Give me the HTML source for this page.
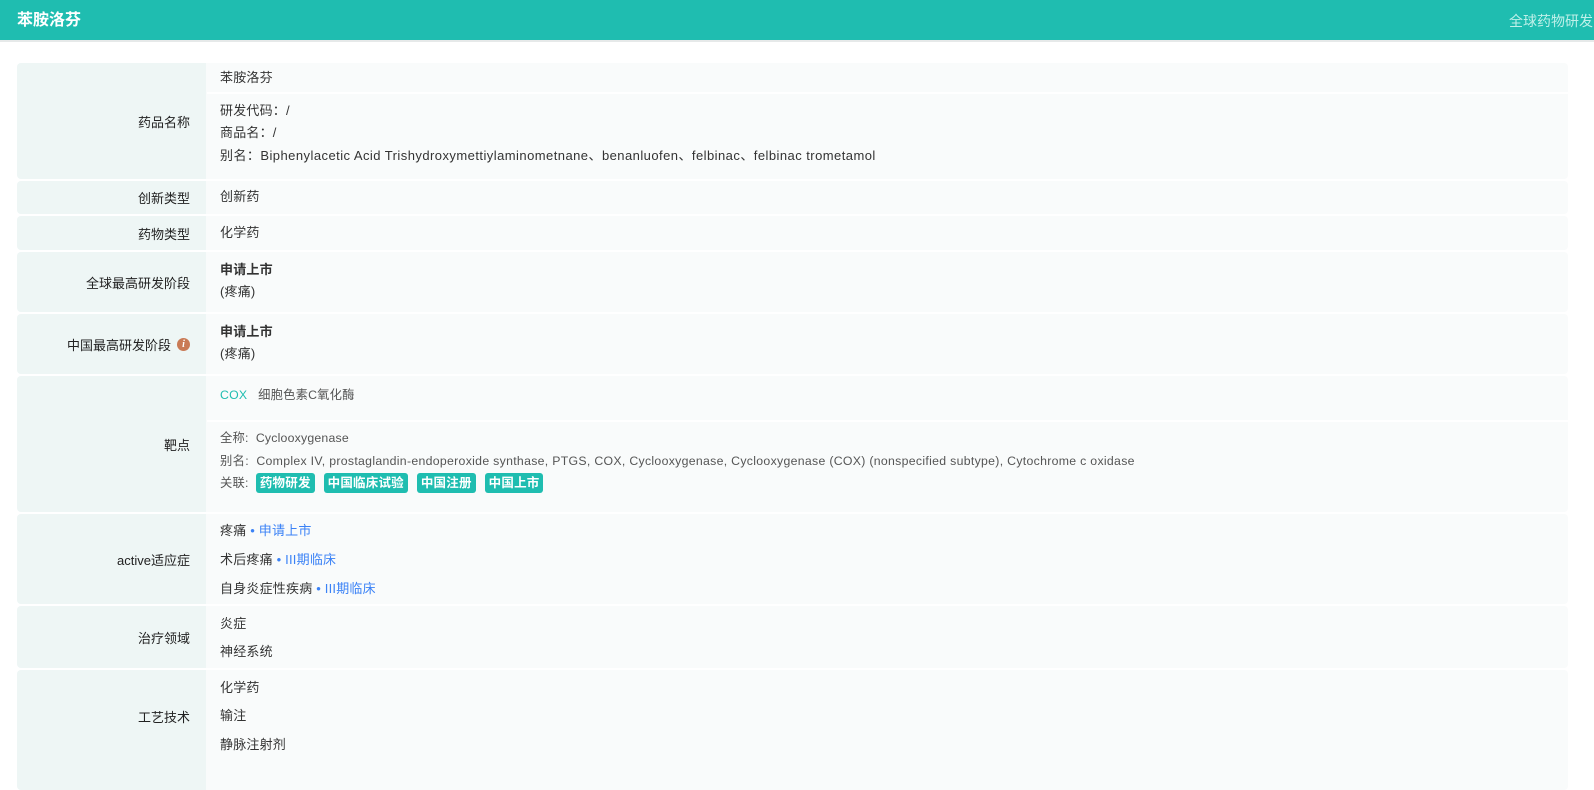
<!DOCTYPE html>
<html><head><meta charset="utf-8"><style>
*{margin:0;padding:0;box-sizing:border-box}
body{width:1594px;height:772px;overflow:hidden;background:#fff;font-family:"Liberation Sans","Noto Sans CJK SC",sans-serif;font-size:13px;color:#333}
.hd{position:absolute;left:0;top:0;width:1594px;height:42px;background:#1fbdb0;border-bottom:2px solid #e6e9e9;overflow:hidden}
.hd .t{position:absolute;left:17px;top:10px;color:#fff;font-size:16px;font-weight:bold;line-height:22px}
.hd .r{position:absolute;left:1509px;top:12px;color:#bff0e9;font-size:14px;line-height:18px;white-space:nowrap}
.row{position:absolute;left:17px;width:1551px;border-radius:4px;overflow:hidden;background:#f9fbfb}
.lb{position:absolute;left:0;top:0;bottom:0;width:189px;background:#eef6f5;display:flex;align-items:center;justify-content:flex-end;padding-right:16px;color:#222}
.l{position:absolute;left:203px;line-height:20px;white-space:nowrap;letter-spacing:0.2px}
.b{font-weight:bold}
.sep{position:absolute;left:190px;right:0;height:2px;background:#fff}
.g{color:#555;font-size:12.3px}
.tag{display:inline-block;background:#1fbdb0;color:#fff;font-weight:bold;font-size:12.5px;line-height:20px;padding:0 4px;border-radius:3px;margin-right:9px}
.bl{color:#3b82f6}
.i{display:inline-block;width:13px;height:13px;border-radius:50%;background:#c97a55;color:#fff;font-size:10px;font-style:italic;font-weight:bold;text-align:center;line-height:13px;margin-left:6px;font-family:"Liberation Serif",serif}
</style></head><body>
<div class="hd"><div class="t">苯胺洛芬</div><div class="r">全球药物研发</div></div>

<div class="row" style="top:63px;height:116px">
<div class="lb">药品名称</div>
<div class="l" style="top:5px">苯胺洛芬</div>
<div class="sep" style="top:29px"></div>
<div class="l" style="top:38px">研发代码：/</div>
<div class="l" style="top:60px">商品名：/</div>
<div class="l" style="top:83px;letter-spacing:0.45px">别名：Biphenylacetic Acid Trishydroxymettiylaminometnane、benanluofen、felbinac、felbinac trometamol</div>
</div>

<div class="row" style="top:181px;height:33px"><div class="lb">创新类型</div><div class="l" style="top:6px">创新药</div></div>
<div class="row" style="top:216px;height:34px"><div class="lb">药物类型</div><div class="l" style="top:7px">化学药</div></div>

<div class="row" style="top:252px;height:60px"><div class="lb">全球最高研发阶段</div>
<div class="l b" style="top:8px">申请上市</div><div class="l" style="top:30px">(疼痛)</div></div>

<div class="row" style="top:314px;height:60px"><div class="lb">中国最高研发阶段<span class="i">i</span></div>
<div class="l b" style="top:8px">申请上市</div><div class="l" style="top:30px">(疼痛)</div></div>

<div class="row" style="top:376px;height:136px"><div class="lb">靶点</div>
<div class="l g" style="top:9px"><span style="color:#1fbdb0">COX</span>&nbsp;&nbsp; 细胞色素C氧化酶</div>
<div class="sep" style="top:44px"></div>
<div class="l g" style="top:52px">全称:&nbsp; Cyclooxygenase</div>
<div class="l g" style="top:75px;letter-spacing:0.3px">别名:&nbsp; Complex IV, prostaglandin-endoperoxide synthase, PTGS, COX, Cyclooxygenase, Cyclooxygenase (COX) (nonspecified subtype), Cytochrome c oxidase</div>
<div class="l g" style="top:97px">关联:&nbsp; <span class="tag">药物研发</span><span class="tag">中国临床试验</span><span class="tag">中国注册</span><span class="tag">中国上市</span></div>
</div>

<div class="row" style="top:514px;height:90px"><div class="lb">active适应症</div>
<div class="l" style="top:7px">疼痛<span class="bl"> • 申请上市</span></div>
<div class="l" style="top:36px">术后疼痛<span class="bl"> • III期临床</span></div>
<div class="l" style="top:65px">自身炎症性疾病<span class="bl"> • III期临床</span></div>
</div>

<div class="row" style="top:606px;height:62px"><div class="lb">治疗领域</div>
<div class="l" style="top:8px">炎症</div><div class="l" style="top:36px">神经系统</div></div>

<div class="row" style="top:670px;height:120px"><div class="lb" style="bottom:0"></div><div class="lb" style="bottom:auto;height:92px;background:transparent">工艺技术</div>
<div class="l" style="top:8px">化学药</div><div class="l" style="top:36px">输注</div><div class="l" style="top:65px">静脉注射剂</div></div>
</body></html>
